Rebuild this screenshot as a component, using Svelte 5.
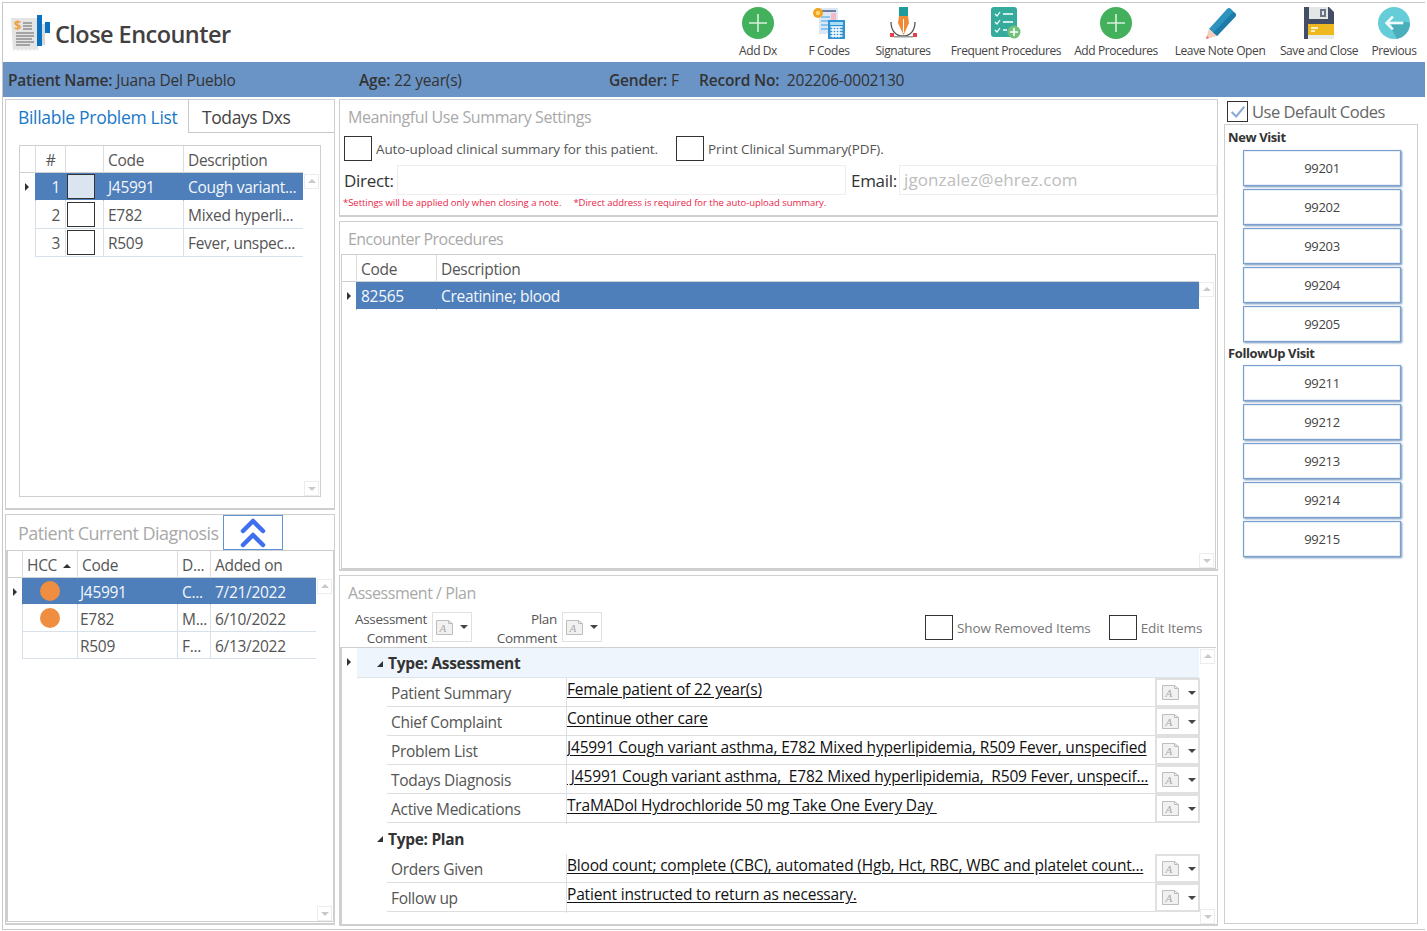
<script>
  const tools = [
    { label: 'Add Dx', icon: 'add' }, { label: 'F Codes', icon: 'fcodes' }, { label: 'Signatures', icon: 'sign' },
    { label: 'Frequent Procedures', icon: 'freq' }, { label: 'Add Procedures', icon: 'add' },
    { label: 'Leave Note Open', icon: 'pencil' }, { label: 'Save and Close', icon: 'save' }, { label: 'Previous', icon: 'back' }
  ];
  const billable = [
    ['1', 'J45991', 'Cough variant...'], ['2', 'E782', 'Mixed hyperli...'], ['3', 'R509', 'Fever, unspec...']
  ];
  const current = [
    [true, 'J45991', 'C...', '7/21/2022'], [true, 'E782', 'M...', '6/10/2022'], [false, 'R509', 'F...', '6/13/2022']
  ];
  const assess = [
    ['Patient Summary', 'Female patient of 22 year(s)'],
    ['Chief Complaint', 'Continue other care'],
    ['Problem List', 'J45991 Cough variant asthma, E782 Mixed hyperlipidemia, R509 Fever, unspecified'],
    ['Todays Diagnosis', ' J45991 Cough variant asthma,  E782 Mixed hyperlipidemia,  R509 Fever, unspecif...'],
    ['Active Medications', 'TraMADol Hydrochloride 50 mg Take One Every Day ']
  ];
  const plan = [
    ['Orders Given', 'Blood count; complete (CBC), automated (Hgb, Hct, RBC, WBC and platelet count...'],
    ['Follow up', 'Patient instructed to return as necessary.']
  ];
  const newVisit = ['99201', '99202', '99203', '99204', '99205'];
  const followUp = ['99211', '99212', '99213', '99214', '99215'];
</script>

{#snippet docIcon()}
  <svg class="doc" viewBox="0 0 17 15" width="17" height="15">
    <path d="M.5.5h12l4 3v11H.5z" fill="#f1f1f1" stroke="#bdbdbd"/>
    <path d="M12.5.5v3h4" fill="none" stroke="#bdbdbd"/>
    <text x="3.5" y="12" class="doc-a">A</text>
  </svg>
{/snippet}

{#snippet action()}
  <div class="action">{@render docIcon()}<span class="caret"></span></div>
{/snippet}

{#snippet rowRow(r)}
  <div class="ap-row">
    <div class="ap-label">{r[0]}</div>
    <div class="ap-value"><u>{r[1]}</u></div>
    {@render action()}
  </div>
{/snippet}

{#snippet icon(name)}
  {#if name === 'add'}
    <svg viewBox="0 0 32 32" width="32" height="32"><circle cx="16" cy="16" r="16" fill="#43b05c"/><path d="M16 7v18M7 16h18" stroke="#d8f0dd" stroke-width="1.6"/></svg>
  {:else if name === 'fcodes'}
    <svg viewBox="0 0 32 32" width="32" height="32">
      <path d="M6 1h19v26H6z" fill="#dbe7f6"/><path d="M9 3h14v2H9z" fill="#6c7fa0"/><path d="M18 6h5v10h-5z" fill="#f4b8c8"/><path d="M8 9h9v2H8zM8 13h9v2H8zM8 17h9v2H8zM8 21h9v2H8z" fill="#8cc4ee"/>
      <rect x="15" y="13" width="17" height="19" fill="#2f93d1"/><rect x="17" y="15" width="13" height="3" fill="#a9dcf5"/>
      <path d="M17.5 20h12M17.5 23h12M17.5 26h12M17.5 29h12M20 19.5v11M23 19.5v11M26 19.5v11" stroke="#fff" stroke-width="1.3"/>
      <circle cx="5" cy="6" r="5" fill="#f2a31d"/><circle cx="5" cy="6" r="2.2" fill="#fbd572"/>
    </svg>
  {:else if name === 'sign'}
    <svg viewBox="0 0 32 32" width="32" height="32">
      <path d="M4 15c0 9 5 14 12 14s12-5 12-14" fill="none" stroke="#555" stroke-width="1.3"/>
      <rect x="12" y="0" width="9" height="9" fill="#1f9b9b"/><path d="M12 9h9l1 7-5.5 12L11 16z" fill="#f08a34"/><path d="M16.5 12v14" stroke="#fff" stroke-width="1"/>
      <rect x="3" y="26" width="4" height="4" fill="#e8404a"/><rect x="26" y="26" width="4" height="4" fill="#e8404a"/><rect x="7" y="29" width="19" height="1.5" fill="#9a9a9a"/>
    </svg>
  {:else if name === 'freq'}
    <svg viewBox="0 0 32 32" width="32" height="32">
      <rect x="1" y="0" width="26" height="30" rx="3" fill="#35ab9e"/>
      <path d="M5 7l2 2 3-4M5 15l2 2 3-4M5 23l2 2 3-4" fill="none" stroke="#fff" stroke-width="1.2"/>
      <path d="M13 7h10M13 15h10M13 23h4" stroke="#fff" stroke-width="1.4"/>
      <circle cx="24" cy="25" r="6.5" fill="#72c27c"/><path d="M24 21v8M20 25h8" stroke="#fff" stroke-width="1.6"/>
    </svg>
  {:else if name === 'pencil'}
    <svg viewBox="0 0 32 32" width="32" height="32">
      <path d="M5 22L23 2q2-2 4 0l4 4q2 2 0 4L13 29z" fill="#2d93bf"/><path d="M9 26L29 5l2 1q2 2 0 4L13 29z" fill="#1f7ca6"/>
      <path d="M5 22l8 7-11 3z" fill="#f6cdb8"/><path d="M3 29l-1 3 3-1z" fill="#e9636a"/>
    </svg>
  {:else if name === 'save'}
    <svg viewBox="0 0 32 32" width="32" height="32">
      <path d="M1 0h25l5 5v27H1z" fill="#434d66"/><path d="M6 0h19v12H6z" fill="#e3e7e6"/><rect x="17" y="2" width="6" height="8" fill="#6b7488"/><rect x="19" y="4" width="2" height="4" fill="#e3e7e6"/>
      <rect x="5" y="17" width="26" height="15" fill="#e8edec"/><rect x="5" y="17" width="26" height="11" fill="#eeb81f"/>
      <path d="M8 21h7M8 24h4" stroke="#fff" stroke-width="1.4"/><rect x="5" y="28" width="26" height="4" fill="#e8edec"/>
    </svg>
  {:else}
    <svg viewBox="0 0 32 32" width="32" height="32">
      <circle cx="16" cy="16" r="16" fill="#64cdd8"/>
      <path d="M13 21l6 11a16 16 0 0 0 13-16l-3-1H15z" fill="#4aaebb"/>
      <path d="M14 9l-7 7 7 7 1.500-1.500L11 17h14v-2H11l4.500-4.500z" fill="#f1fbfb" stroke="#f1fbfb" stroke-width=".6"/>
    </svg>
  {/if}
{/snippet}

<div class="page">
  <header class="top">
    <div class="brand">
      <svg viewBox="0 0 42 40" width="42" height="40">
        <path d="M1 4h27v33l-2-2-2 2-2-2-2 2-2-2-2 2-2-2-2 2-2-2-2 2-2-2-3 2z" fill="#e4e4e4"/>
        <text x="4" y="16" class="dollar">$</text>
        <path d="M13 9h9M13 12h9M13 15h9M6 19h18M6 22h18M6 25h16M6 28h18M6 31h14" stroke="#8e8e8e" stroke-width="1.3"/>
        <rect x="28" y="10" width="4" height="22" fill="#d0d0d0"/><rect x="27" y="1" width="5" height="31" fill="#0a72c2"/><rect x="35" y="8" width="5" height="11" fill="#0a72c2"/><rect x="32" y="10" width="3" height="21" fill="#d8d8d8"/>
      </svg>
      <h1>Close Encounter</h1>
    </div>
    <nav class="tools">
      {#each tools as t}
        <div class="tool">
          <div class="tool-ico">{@render icon(t.icon)}</div>
          <span>{t.label}</span>
        </div>
      {/each}
    </nav>
  </header>

  <div class="patient">
    <div><b>Patient Name:</b> Juana Del Pueblo</div>
    <div><b>Age:</b> 22 year(s)</div>
    <div><b>Gender:</b> F</div>
    <div><b>Record No:</b>&nbsp; 202206-0002130</div>
  </div>

  <main class="main">
    <section class="col-left">
      <div class="panel billable">
        <div class="tabs">
          <div class="tab active">Billable Problem List</div>
          <div class="tab">Todays Dxs</div>
        </div>
        <div class="grid g-bill">
          <div class="thead">
            <div class="rh"></div><div class="th center">#</div><div class="th"></div><div class="th">Code</div><div class="th">Description</div>
          </div>
          {#each billable as r, i}
            <div class="tr" class:sel={i === 0}>
              <div class="rh">{#if i === 0}<span class="arrow"></span>{/if}</div>
              <div class="td num">{r[0]}</div>
              <div class="td chk"><span class="box"></span></div>
              <div class="td">{r[1]}</div>
              <div class="td">{r[2]}</div>
            </div>
          {/each}
          <div class="sb up one"></div>
          <div class="sb down"></div>
        </div>
      </div>

      <div class="panel current">
        <div class="cur-head">
          <div class="title big">Patient Current Diagnosis</div>
          <div class="collapse">
            <svg viewBox="0 0 26 30" width="26" height="30"><path d="M3 13L13 3l10 10M3 27L13 17l10 10" fill="none" stroke="#3f6ff0" stroke-width="4.500" stroke-linecap="round" stroke-linejoin="round"/></svg>
          </div>
        </div>
        <div class="grid g-cur">
          <div class="thead">
            <div class="rh"></div><div class="th">HCC <i class="sort"></i></div><div class="th">Code</div><div class="th">D...</div><div class="th">Added on</div>
          </div>
          {#each current as r, i}
            <div class="tr" class:sel={i === 0}>
              <div class="rh">{#if i === 0}<span class="arrow"></span>{/if}</div>
              <div class="td dotc">{#if r[0]}<span class="dot"></span>{/if}</div>
              <div class="td code">{r[1]}</div>
              <div class="td">{r[2]}</div>
              <div class="td">{r[3]}</div>
            </div>
          {/each}
          <div class="sb up one"></div>
          <div class="sb down"></div>
        </div>
      </div>
    </section>

    <section class="col-mid">
      <div class="panel mu">
        <div class="title t-mu">Meaningful Use Summary Settings</div>
        <div class="mu-checks">
          <span class="box"></span><span class="lbl l1">Auto-upload clinical summary for this patient.</span>
          <span class="box"></span><span class="lbl">Print Clinical Summary(PDF).</span>
        </div>
        <div class="mu-inputs">
          <label for="d">Direct:</label><div class="input" id="d"></div>
          <label for="e">Email:</label><div class="input ph" id="e">jgonzalez@ehrez.com</div>
        </div>
        <div class="note"><span>*Settings will be applied only when closing a note.</span><span>*Direct address is required for the auto-upload summary.</span></div>
      </div>

      <div class="panel proc">
        <div class="title t-proc">Encounter Procedures</div>
        <div class="grid g-proc">
          <div class="thead"><div class="rh"></div><div class="th">Code</div><div class="th">Description</div></div>
          <div class="tr sel"><div class="rh"><span class="arrow"></span></div><div class="td">82565</div><div class="td">Creatinine; blood</div></div>
          <div class="sb up one"></div>
          <div class="sb down"></div>
        </div>
      </div>

      <div class="panel ap">
        <div class="title t-ap">Assessment / Plan</div>
        <div class="ap-tools">
          <div class="ap-c c1">Assessment<br/>Comment</div>
          <div class="action big">{@render docIcon()}<span class="caret"></span></div>
          <div class="ap-c c2">Plan<br/>Comment</div>
          <div class="action big">{@render docIcon()}<span class="caret"></span></div>
          <div class="ap-right">
            <span class="box"></span><span class="lbl l2">Show Removed Items</span>
            <span class="box"></span><span class="lbl">Edit Items</span>
          </div>
        </div>
        <div class="grid g-ap">
          <div class="rh ap-rh"><span class="arrow"></span></div>
          <div class="ap-body">
            <div class="group first"><i class="tri"></i><b>Type: Assessment</b></div>
            {#each assess as r}{@render rowRow(r)}{/each}
            <div class="group plan"><i class="tri"></i><b>Type: Plan</b></div>
            {#each plan as r}{@render rowRow(r)}{/each}
          </div>
          <div class="sb up"></div>
          <div class="sb down"></div>
        </div>
      </div>
    </section>

    <section class="col-right">
      <div class="default">
        <span class="box checked"><svg viewBox="0 0 20 20" width="18" height="18"><path d="M3 10l5 5 9-11" fill="none" stroke="#86a8d2" stroke-width="2.200"/></svg></span>
        <span>Use Default Codes</span>
      </div>
      <div class="codes">
        <h2>New Visit</h2>
        <div class="btns b1">{#each newVisit as c}<button>{c}</button>{/each}</div>
        <h2 class="fu">FollowUp Visit</h2>
        <div class="btns">{#each followUp as c}<button>{c}</button>{/each}</div>
      </div>
    </section>
  </main>
</div>

<style>
  :global(html, body) { margin: 0; background: #fff; overflow: hidden; }
  * { box-sizing: border-box; }
  .page {
    position: relative; margin: 2px 0 0 2px; width: 1423px; height: 928px;
    border: 1px solid #c8c8c8; border-right: 0;
    font-family: "Open Sans", "Noto Sans", sans-serif; color: #444; letter-spacing: -0.3px;
    overflow: hidden; background: #fff;
  }
  .top { height: 59px; display: flex; justify-content: space-between; }
  .brand { display: flex; align-items: center; padding: 3px 0 0 7px; height: 59px; }
  .brand svg { margin-top: 0; }
  .dollar { font: 700 13px "Open Sans", sans-serif; fill: #f0a03a; }
  h1 { margin: 0 0 0 3px; font-size: 23.500px; font-weight: 600; color: #43413f; letter-spacing: -0.55px; }
  .tools {
    display: grid; grid-template-columns: 66px 76px 72px 134px 86px 109px 102px 48px;
    margin-right: 7px; padding-top: 4px;
  }
  .tool { display: flex; flex-direction: column; align-items: center; font-size: 12px; color: #444; white-space: nowrap; letter-spacing: -0.4px; }
  .tool:nth-child(6) { padding-left: 13px; }
  .tool-ico { height: 32px; margin-bottom: 3px; }
  .tool svg { display: block; }

  .patient {
    height: 35px; background: #6a93c6; display: grid;
    grid-template-columns: 351px 250px 90px 1fr; padding: 0 0 0 5px; align-items: center;
    font-size: 15.500px; color: #333; letter-spacing: -0.2px;
  }
  .patient b { font-weight: 600; }

  .main { display: grid; grid-template-columns: 330px 879px 196px; column-gap: 4px; padding: 2px 0 0 2px; height: 830px; }
  .col-right { margin-left: 2px; }
  .col-left { display: grid; grid-template-rows: 411px 411px; row-gap: 4px; }
  .col-mid { display: grid; grid-template-rows: 118px 350px 351px; row-gap: 4px; }
  .panel { border: 1px solid #cfcfcf; border-width: 1px 1px 2px 1px; position: relative; background: #fff; }

  .title { color: #a9a9a9; font-size: 16px; padding: 5px 0 0 8px; height: 33px; line-height: 24px; }
  .t-mu { letter-spacing: -0.4px; }
  .t-proc { letter-spacing: -0.55px; }
  .t-ap { letter-spacing: -0.45px; }
  .title.big { font-size: 18px; padding: 0; height: auto; line-height: 24px; letter-spacing: -0.55px; }

  .tabs { display: flex; height: 33px; }
  .tab { font-size: 17.500px; padding: 4px 0 0 13px; line-height: 26px; border-bottom: 1px solid #c8c8c8; flex: 1; letter-spacing: -0.4px; }
  .tab.active { flex: 0 0 183px; color: #1a78c8; border-bottom: 0; border-right: 1px solid #c8c8c8; padding-left: 12px; letter-spacing: -0.3px; }

  .grid { position: relative; border: 1px solid #cfcfcf; font-size: 15.500px; color: #555; }
  .thead, .tr { display: grid; }
  .thead { height: 27px; border-bottom: 1px solid #cfcfcf; }
  .tr { height: 28px; }
  .th { border-left: 1px solid #dcdcdc; padding-left: 4px; line-height: 29px; white-space: nowrap; }
  .th.center { text-align: center; padding: 0; }
  .td { border-left: 1px solid #d8e0ea; border-bottom: 1px solid #d8e0ea; padding-left: 4px; line-height: 28px; white-space: nowrap; overflow: hidden; }
  .rh { position: relative; }
  .tr.sel .td { background: #4e7fba; color: #f4f7fb; border-color: #4e7fba; border-bottom-color: #fff; }
  .arrow { position: absolute; left: 5px; top: 10px; border-left: 4px solid #333; border-top: 4px solid transparent; border-bottom: 4px solid transparent; }
  .num { text-align: right; padding: 0 5px 0 0; }
  .chk { padding: 0 0 0 1px; display: flex; align-items: center; }
  .box { display: inline-block; width: 28px; height: 25px; border: 1px solid #333; background: #fff; flex: none; }
  .tr .box { border-width: 1.5px; }
  .tr.sel .box { background: #dbe5f1; }

  .sb { position: absolute; right: 1px; width: 15px; height: 15px; border: 1px solid #ececec; background: #fff; }
  .sb::after { content: ""; position: absolute; left: 3px; border-left: 4px solid transparent; border-right: 4px solid transparent; }
  .sb.up { top: 1px; }
  .sb.up::after { top: 4px; border-bottom: 4px solid #c9c9c9; }
  .sb.up.one { top: 28px; }
  .sb.down { bottom: 0; }
  .sb.down::after { top: 5px; border-top: 4px solid #c9c9c9; }

  .g-bill { position: absolute; left: 13px; top: 45px; width: 302px; height: 352px; }
  .g-bill .thead, .g-bill .tr { grid-template-columns: 15px 30px 38px 80px 120px; width: 283px; }

  .cur-head { display: flex; height: 35px; padding-left: 12px; align-items: flex-end; }
  .cur-head .title { padding-bottom: 5px; }
  .collapse { width: 60px; height: 35px; border: 1px solid #5f93d6; display: flex; align-items: center; justify-content: center; margin-left: 4px; }
  .g-cur { position: absolute; left: 0; right: 0; top: 35px; bottom: 1px; border-width: 1px 1px 1px 2px; }
  .g-cur .thead, .g-cur .tr { grid-template-columns: 14px 55px 100px 33px 106px; width: 308px; }
  .g-cur .thead { height: 27px; }
  .g-cur .tr { height: 27px; }
  .g-cur .code { padding-left: 2px; }
  .dotc { display: flex; justify-content: center; align-items: center; padding: 0; }
  .dot { width: 20px; height: 20px; border-radius: 50%; background: #ef8d40; }
  .sort { display: inline-block; vertical-align: 3px; margin-left: 2px; border-left: 4px solid transparent; border-right: 4px solid transparent; border-bottom: 4px solid #333; }

  .mu-checks { display: flex; align-items: center; padding-left: 4px; height: 25px; margin-top: 3px; font-size: 13.500px; color: #555; letter-spacing: -0.1px; }
  .lbl { margin-left: 4px; }
  .l1 { margin-right: 18px; }
  .mu-inputs { display: grid; grid-template-columns: 53px 449px 53px 1fr; height: 30px; margin-top: 4px; padding-left: 4px; font-size: 17px; color: #333; align-items: center; }
  .mu-inputs label:nth-of-type(2) { padding-left: 5px; }
  .input { height: 30px; border: 1px solid #ededed; line-height: 28px; padding-left: 4px; }
  .input.ph { color: #bdbdbd; letter-spacing: 0.1px; }
  .note { font-size: 9.500px; color: #ea1c47; letter-spacing: -0.04px; padding-left: 3px; margin-top: 1px; display: flex; gap: 12px; line-height: 14px; }

  .g-proc { position: absolute; left: 1px; right: 1px; top: 32px; bottom: 0; }
  .g-proc .thead, .g-proc .tr { grid-template-columns: 14px 80px 1fr; width: 857px; }
  .g-proc .sb.up.one { top: 27px; }

  .ap-tools { display: flex; height: 38px; font-size: 13.500px; color: #555; padding-top: 3px; position: relative; }
  .ap-c { text-align: right; line-height: 19px; width: 87px; margin-right: 5px; margin-top: -2px; }
  .c2 { width: 85px; }
  .action { width: 45px; height: 29px; border: 2px solid #e0e0e0; display: flex; align-items: center; padding-left: 5px; flex: none; margin-left: 2px; }
  .action.big { width: 40px; height: 30px; border-width: 1px; margin: 0; padding-left: 3px; }
  .doc { display: block; flex: none; }
  .doc-a { font: italic 11px "Liberation Serif", serif; fill: #aaa; }
  .caret { margin-left: 9px; border-left: 4px solid transparent; border-right: 4px solid transparent; border-top: 4px solid #444; }
  .action.big .caret { margin-left: 7px; }
  .ap-right { position: absolute; left: 585px; top: 6px; display: flex; align-items: center; height: 25px; color: #777; letter-spacing: -0.1px; }
  .l2 { margin-right: 18px; }

  .g-ap { position: absolute; left: 0; right: 1px; top: 71px; bottom: 0; display: flex; border-width: 1px 0 0 2px; }
  .ap-rh { width: 15px; flex: none; }
  .ap-body { width: 842px; }
  .group { height: 30px; padding-left: 23px; position: relative; line-height: 31px; font-size: 15.500px; color: #333; }
  .group b { font-weight: 700; margin-left: 8px; }
  .group.first { background: #eef5fc; border-bottom: 1px solid #dfe5ea; height: 30px; }
  .group.plan { height: 31px; line-height: 33px; }
  .tri { position: absolute; left: 20px; top: 13px; border-left: 3px solid transparent; border-right: 3px solid #333; border-bottom: 3px solid #333; border-top: 3px solid transparent; }
  .ap-row { display: grid; grid-template-columns: 179px 587px 47px; margin-left: 30px; height: 29px; border-bottom: 1px solid #dedede; }
  .ap-label { padding-left: 4px; line-height: 30px; }
  .ap-value { border-left: 1px solid #d8e0ea; color: #111; line-height: 23px; padding-left: 0; white-space: pre; overflow: hidden; letter-spacing: -0.18px; }
  .ap-value u { text-underline-offset: 2px; }

  .default { display: flex; align-items: center; height: 25px; font-size: 16.500px; color: #666; font-weight: 500; padding: 0 0 0 3px; margin-top: 0; gap: 4px; letter-spacing: -0.5px; }
  .box.checked { width: 21px; height: 21px; display: flex; align-items: center; justify-content: center; }
  .codes { border: 1px solid #cfcfcf; height: 800px; }
  h2 { margin: 0; font-size: 13px; font-weight: 700; color: #333; padding: 3px 0 0 3px; line-height: 18px; letter-spacing: -0.4px; }
  .fu { padding-top: 2px; margin-top: 0; }
  .btns { display: grid; row-gap: 3px; padding: 3px 0 0 18px; }
  .b1 { padding-top: 4px; }
  button {
    width: 158px; height: 36px; background: #fff; border: 1px solid #7aa0d0; box-shadow: 1px 1px 2px #6d8fbc, inset 0 0 0 1px #e8eff8;
    font: 13px "Open Sans", sans-serif; letter-spacing: -0.3px; color: #444; padding: 0;
  }
</style>
